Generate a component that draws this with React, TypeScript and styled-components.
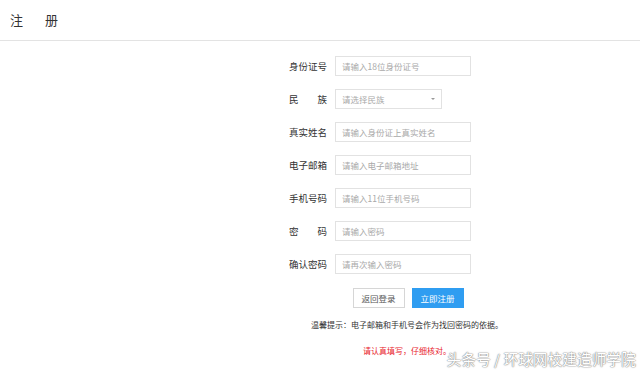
import React from "react";
import styled, { createGlobalStyle } from "styled-components";

const Global = createGlobalStyle`
  html, body { margin: 0; padding: 0; background: #fff; }
  body { font-family: "Noto Sans CJK SC", "Noto Sans", sans-serif; color: #333; }
  * { box-sizing: border-box; }
`;

const Page = styled.div`
  position: relative;
  width: 640px;
  height: 372px;
  overflow: hidden;
`;

const Header = styled.div`
  height: 41px;
  border-bottom: 1px solid #e3e3e3;
  display: flex;
  align-items: center;
  padding: 0 0 2px 10px;
`;

const Title = styled.h1`
  margin: 0;
  font-size: 13px;
  font-weight: normal;
  letter-spacing: 22px;
  color: #333;
`;

const Form = styled.div`
  display: flex;
  flex-direction: column;
  gap: 13px;
  padding: 15px 0 0 289px;
`;

const Row = styled.div`
  display: flex;
  align-items: center;
  gap: 8px;
  height: 20px;
`;

const Label = styled.span<{ $spread?: boolean }>`
  width: 38px;
  font-size: 9.5px;
  color: #333;
  display: flex;
  justify-content: ${(p) => (p.$spread ? "space-between" : "flex-end")};
  white-space: nowrap;
`;

const Input = styled.div`
  width: 136px;
  height: 20px;
  border: 1px solid #e2e2e2;
  font-size: 8.5px;
  color: #a9a9a9;
  display: flex;
  align-items: center;
  padding-left: 6px;
`;

const Select = styled(Input)`
  width: 107px;
  justify-content: space-between;
  padding-right: 6px;
`;

const Caret = styled.span`
  width: 0;
  height: 0;
  border-left: 2.5px solid transparent;
  border-right: 2.5px solid transparent;
  border-top: 2.5px solid #999;
`;

const Bottom = styled.div`
  width: 236px;
  margin: 14px 0 0 289px;
  display: flex;
  flex-direction: column;
  align-items: center;
`;

const Buttons = styled.div`
  display: flex;
  gap: 7px;
  padding-left: 2px;
`;

const Button = styled.button<{ $primary?: boolean }>`
  width: 52px;
  height: 20px;
  font-family: inherit;
  font-size: 8.5px;
  padding: 0;
  border: 1px solid ${(p) => (p.$primary ? "#2f9df1" : "#d6d6d6")};
  background: ${(p) => (p.$primary ? "#2f9df1" : "#fff")};
  color: ${(p) => (p.$primary ? "#fff" : "#555")};
`;

const Hint = styled.p`
  margin: 11px 0 0;
  font-size: 8px;
  color: #333;
  white-space: nowrap;
`;

const Warn = styled.p`
  margin: 15px 0 0;
  font-size: 8px;
  color: #e8202a;
  white-space: nowrap;
`;

const Watermark = styled.div`
  position: absolute;
  right: 4px;
  bottom: 3px;
  font-size: 14.5px;
  color: #fff;
  text-shadow: 0 0 1px #8c8c8c, 0 0 1px #8c8c8c, 0 0 2px #aaa;
  letter-spacing: 0.2px;
`;

const fields: { label: string; placeholder: string; spread?: boolean; select?: boolean }[] = [
  { label: "身份证号", placeholder: "请输入18位身份证号" },
  { label: "民族", placeholder: "请选择民族", spread: true, select: true },
  { label: "真实姓名", placeholder: "请输入身份证上真实姓名" },
  { label: "电子邮箱", placeholder: "请输入电子邮箱地址" },
  { label: "手机号码", placeholder: "请输入11位手机号码" },
  { label: "密码", placeholder: "请输入密码", spread: true },
  { label: "确认密码", placeholder: "请再次输入密码" },
];

export default function App() {
  return (
    <Page>
      <Global />
      <Header>
        <Title>注册</Title>
      </Header>
      <Form>
        {fields.map((f) => (
          <Row key={f.label}>
            <Label $spread={f.spread}>
              {f.spread ? f.label.split("").map((c) => <span key={c}>{c}</span>) : f.label}
            </Label>
            {f.select ? (
              <Select>
                {f.placeholder}
                <Caret />
              </Select>
            ) : (
              <Input>{f.placeholder}</Input>
            )}
          </Row>
        ))}
      </Form>
      <Bottom>
        <Buttons>
          <Button>返回登录</Button>
          <Button $primary>立即注册</Button>
        </Buttons>
        <Hint>温馨提示：电子邮箱和手机号会作为找回密码的依据。</Hint>
        <Warn>请认真填写，仔细核对。</Warn>
      </Bottom>
      <Watermark>头条号 / 环球网校建造师学院</Watermark>
    </Page>
  );
}
